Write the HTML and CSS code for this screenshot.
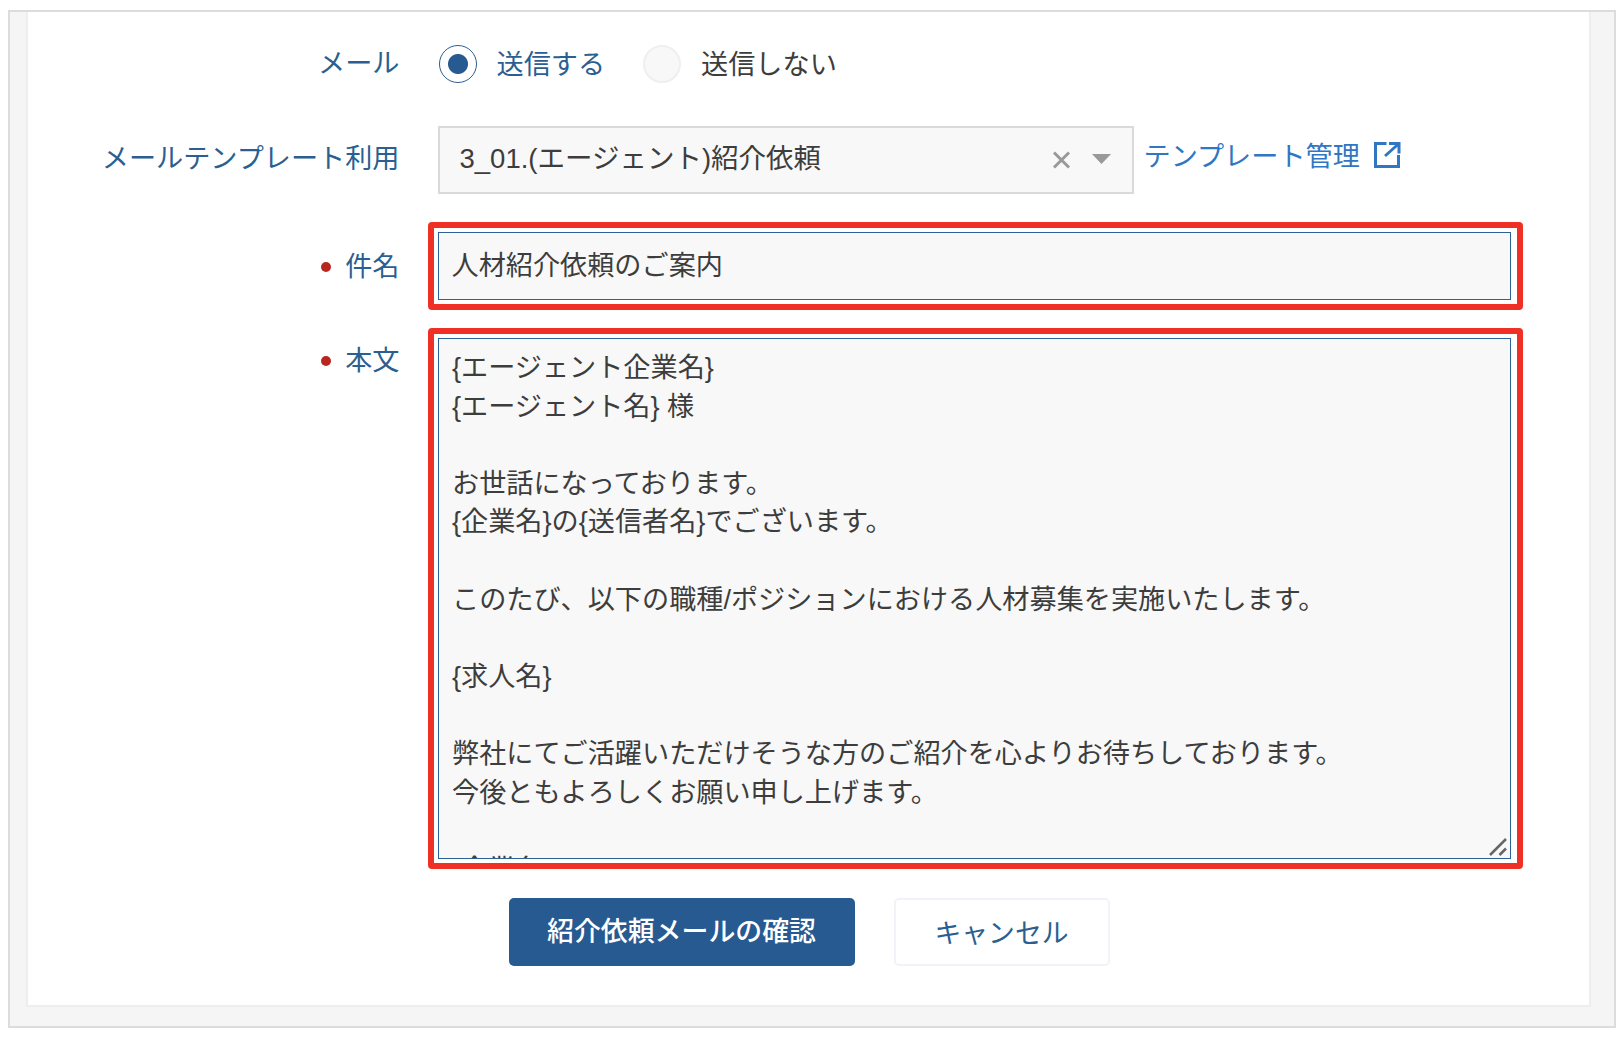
FILE: index.html
```html
<!DOCTYPE html>
<html lang="ja">
<head>
<meta charset="utf-8">
<title>紹介依頼メール</title>
<link rel="stylesheet" href="styles.css">
</head>
<body>
<main class="panel">
  <form class="card">
    <div class="row row-mail">
      <span class="label">メール</span>
      <div class="radios">
        <label class="radio radio-on"><span class="radio-mark"></span><span class="radio-text">送信する</span></label>
        <label class="radio"><span class="radio-mark"></span><span class="radio-text">送信しない</span></label>
      </div>
    </div>
    <div class="row row-template">
      <span class="label">メールテンプレート利用</span>
      <div class="select">
        <span class="select-value">3_01.(エージェント)紹介依頼</span>
        <svg class="select-clear" viewBox="0 0 18 18" aria-hidden="true"><path d="M1.500 1.500l15 15M16.500 1.500l-15 15"/></svg>
        <svg class="select-arrow" viewBox="0 0 19 10" aria-hidden="true"><path d="M0 0h19l-9.500 10z"/></svg>
      </div>
      <a class="manage-link" href="#">テンプレート管理
        <svg viewBox="0 0 27 26" aria-hidden="true"><path d="M12.500 1.500H1.500v23h23V13M11 14L25 1.500M15 1.500h10V11.500"/></svg>
      </a>
    </div>
    <div class="row row-subject">
      <span class="label label-required">件名</span>
      <div class="highlight">
        <input class="field" type="text" value="人材紹介依頼のご案内">
      </div>
    </div>
    <div class="row row-body">
      <span class="label label-required label-top">本文</span>
      <div class="highlight">
        <div class="body-wrap">
          <textarea class="field field-area">{エージェント企業名}
{エージェント名} 様

お世話になっております。
{企業名}の{送信者名}でございます。

このたび、以下の職種/ポジションにおける人材募集を実施いたします。

{求人名}

弊社にてご活躍いただけそうな方のご紹介を心よりお待ちしております。
今後ともよろしくお願い申し上げます。

{企業名}
{送信者名}</textarea>
          <svg class="grip" viewBox="0 0 18 18" aria-hidden="true"><path d="M1 17L17 1M10.500 17l6.500-6.500"/></svg>
        </div>
      </div>
    </div>
    <div class="actions">
      <button class="btn btn-primary" type="button">紹介依頼メールの確認</button>
      <button class="btn btn-secondary" type="button">キャンセル</button>
    </div>
  </form>
</main>
</body>
</html>
```
FILE: styles.css
```css
* { box-sizing: border-box; }
html, body { margin: 0; background: #fff; }
body {
  font-family: "Liberation Sans", "Noto Sans CJK JP", sans-serif;
  font-size: 27.150px;
  color: #3d3d3d;
  padding: 10px 8.500px 0 8px;
}
.panel {
  height: 1017.500px;
  background: #f5f5f5;
  border: 2px solid #dcdcdc;
  padding: 0 23px 19px 15.500px;
}
.card {
  height: 100%;
  background: #fff;
  border: solid #eeeeee;
  border-width: 0 2px 2px 2px;
  padding: 31px 0 0;
  display: flex;
  flex-direction: column;
}
.row {
  display: grid;
  grid-template-columns: 372px 1fr;
  column-gap: 38px;
  align-items: center;
}
.label {
  color: #2b5f91;
  text-align: right;
  line-height: 38px;
}
.row-template .label { padding-bottom: 2px; }
.label-required { padding-top: 2px; }
.label-required::before {
  content: "";
  display: inline-block;
  width: 10px;
  height: 10px;
  border-radius: 50%;
  background: #b8271e;
  margin-right: 14px;
  vertical-align: 4px;
}
.label-top { align-self: start; padding-top: 14px; }
.radios { display: flex; gap: 38px; margin-left: 1px; }
.radio { display: flex; align-items: center; gap: 20px; }
.radio-text { padding-bottom: 2px; }
.radio-mark {
  width: 38px;
  height: 38px;
  border-radius: 50%;
  border: 2px solid #efefef;
  background: #f8f8f8;
  display: block;
}
.radio-on { color: #2b5f91; }
.radio-on .radio-mark {
  border: 1.500px solid #2b5f91;
  background: radial-gradient(circle, #265a90 0 9.500px, #fff 10.500px);
}
.row-template { margin-top: 42px; }
.select {
  width: 696px;
  height: 68px;
  background: #f8f8f8;
  border: 2px solid #dadada;
  display: flex;
  align-items: center;
  padding: 0 21px 8px 20px;
  grid-column: 2;
  grid-row: 1;
  font-size: 27.500px;
}
.select-value { flex: 1; white-space: nowrap; }
.select-clear {
  width: 19px;
  height: 18px;
  margin: 8px 21px 0 0;
  fill: none;
  stroke: #999;
  stroke-width: 3;
}
.select-arrow { width: 19px; height: 10px; fill: #999; margin-top: 6px; }
.manage-link {
  grid-column: 2;
  grid-row: 1;
  margin-left: 706px;
  margin-bottom: 11px;
  color: #2f77c2;
  text-decoration: none;
  display: flex;
  align-items: center;
  gap: 14px;
}
.manage-link svg {
  width: 27px;
  height: 26px;
  fill: none;
  stroke: #2f77c2;
  stroke-width: 3;
}
.row-subject { margin-top: 28px; }
.row-body { margin-top: 18px; }
.highlight {
  margin: 0 66px 0 -9.500px;
  border: 6px solid #ee3124;
  border-radius: 4px;
  padding: 4px 6px 4px 4px;
}
.field {
  display: block;
  width: 100%;
  margin: 0;
  font: inherit;
  color: #3d3d3d;
  background: #f8f8f8;
  border: 1px solid #2d6299;
  border-radius: 0;
  outline: none;
}
input.field { height: 68px; padding: 0 12.500px 5px; }
.body-wrap { position: relative; }
.field-area {
  height: 521px;
  padding: 10px 13px;
  line-height: 38.600px;
  overflow: hidden;
  resize: none;
}
.grip {
  position: absolute;
  right: 4px;
  bottom: 3px;
  width: 18px;
  height: 18px;
  fill: none;
  stroke: #666;
  stroke-width: 2.500;
}
.actions {
  margin-top: 29px;
  padding-left: 2px;
  display: flex;
  justify-content: center;
  gap: 39px;
}
.btn {
  height: 68px;
  font: inherit;
  border-radius: 5px;
  padding: 0;
}
.btn-primary {
  width: 346px;
  background: #265a90;
  border: 0;
  color: #fff;
  font-weight: 500;
  font-size: 26.900px;
  padding-bottom: 6px;
}
.btn-secondary {
  width: 216px;
  background: #fff;
  border: 2px solid #f0f3f8;
  color: #2b5f91;
  font-size: 26.800px;
  padding-bottom: 2px;
}
```
